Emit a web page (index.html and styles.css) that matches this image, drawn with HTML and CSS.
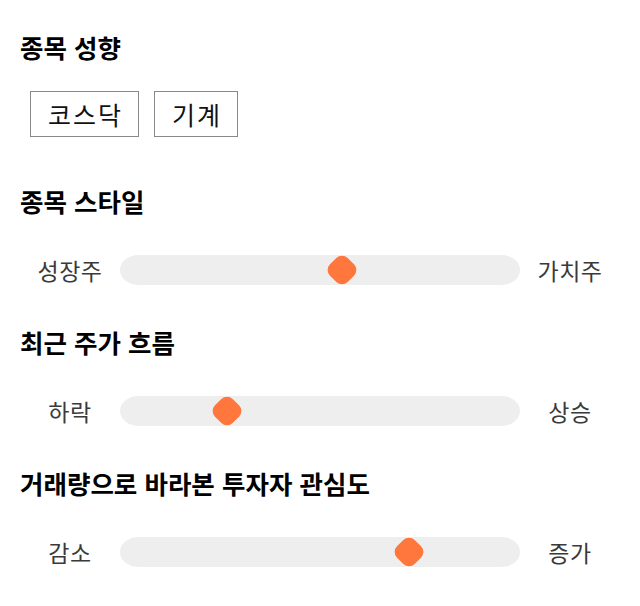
FILE: index.html
```html
<!DOCTYPE html>
<html lang="ko">
<head>
<meta charset="utf-8">
<link rel="stylesheet" href="styles.css">
</head>
<body>
<div class="page">
  <section class="section">
    <h2 class="title">종목 성향</h2>
    <div class="chips">
      <span class="chip">코스닥</span>
      <span class="chip">기계</span>
    </div>
  </section>
  <section class="section section-style">
    <h2 class="title">종목 스타일</h2>
    <div class="slider-row">
      <span class="label">성장주</span>
      <div class="track"><span class="thumb" style="left:55.6%"></span></div>
      <span class="label">가치주</span>
    </div>
  </section>
  <section class="section">
    <h2 class="title">최근 주가 흐름</h2>
    <div class="slider-row">
      <span class="label">하락</span>
      <div class="track"><span class="thumb" style="left:26.8%"></span></div>
      <span class="label">상승</span>
    </div>
  </section>
  <section class="section">
    <h2 class="title">거래량으로 바라본 투자자 관심도</h2>
    <div class="slider-row">
      <span class="label">감소</span>
      <div class="track"><span class="thumb" style="left:72.2%"></span></div>
      <span class="label">증가</span>
    </div>
  </section>
</div>
</body>
</html>
```
FILE: styles.css
```css
html, body {
  margin: 0;
  padding: 0;
  background: #ffffff;
}
body {
  font-family: "Noto Sans CJK KR", "Noto Sans", sans-serif;
  color: #000;
}
.page {
  padding: 31px 20px 0 20px;
  display: flex;
  flex-direction: column;
}
.section {
  display: flex;
  flex-direction: column;
  margin-top: 36px;
}
.section:first-child {
  margin-top: 0;
}
.section-style {
  margin-top: 48px;
}
.title {
  margin: 0;
  font-size: 25.5px;
  line-height: 32px;
  font-weight: 700;
  color: #000;
}
.chips {
  display: flex;
  gap: 15px;
  margin-top: 28px;
  padding-left: 10px;
}
.chip {
  border: 1px solid #888;
  padding: 6px 15px 6px 17px;
  font-size: 25px;
  line-height: 32px;
  letter-spacing: 2px;
  color: #111;
}
.slider-row {
  display: flex;
  align-items: center;
  height: 40px;
  margin-top: 33px;
}
.label {
  width: 100px;
  text-align: center;
  font-size: 23px;
  line-height: 40px;
  letter-spacing: 0.5px;
  color: #3a3a3a;
}
.track {
  position: relative;
  flex: 1;
  height: 30px;
  background: #eeeeee;
  border-radius: 18px / 15px;
}
.thumb {
  position: absolute;
  top: 50%;
  width: 25px;
  height: 25px;
  background: #ff773d;
  border-radius: 8px;
  transform: translate(-50%, -50%) rotate(45deg);
}
```
